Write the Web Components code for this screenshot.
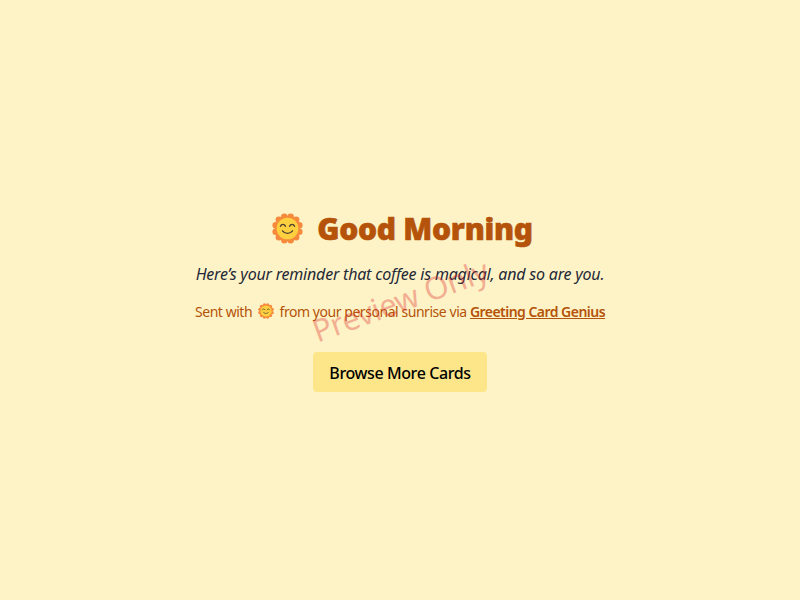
<!DOCTYPE html>
<html lang="en"><head><meta charset="utf-8"><title>Good Morning</title>
<style>
html,body{margin:0;height:100%;background:#fef3c7}
body{font-family:"Noto Sans","Open Sans","Liberation Sans",sans-serif}
a{color:inherit;font-weight:600;letter-spacing:-.53px}
.gap{margin:0 2.5px}
</style></head><body>
<greeting-page>
<sun-face slot="title-icon" size="31"></sun-face>
<span slot="title">Good Morning</span>
<span slot="message">Here’s your reminder that coffee is magical, and so are you.</span>
<span slot="footer">Sent with <sun-face class="gap" size="16"></sun-face> from your personal sunrise via <a href="#">Greeting Card Genius</a></span>
<span slot="action">Browse More Cards</span>
</greeting-page>
<script>
class SunFace extends HTMLElement{
  connectedCallback(){
    const s=+this.getAttribute('size')||16;
    const r=this.shadowRoot||this.attachShadow({mode:'open'});
    let petals='';
    for(let i=0;i<12;i++){const a=(i+.5)*Math.PI/6;petals+=`<circle cx="${(18+14.2*Math.cos(a)).toFixed(2)}" cy="${(18+14.2*Math.sin(a)).toFixed(2)}" r="3.8" fill="#f68a3c"/>`}
    r.innerHTML=`<style>:host{display:inline-block;width:${s}px;height:${s}px;vertical-align:-0.2em}svg{display:block;width:100%;height:100%}</style>
    <svg viewBox="0 0 36 36" aria-hidden="true">${petals}<circle cx="18" cy="18" r="14.6" fill="#f68a3c"/><circle cx="18" cy="18" r="12.6" fill="#fdd03f"/>
    <path d="M9.8 15.4c1.2-3 4.6-3 5.8 0M20.4 15.4c1.2-3 4.6-3 5.8 0M12.2 20.8c2.8 3.8 8.8 3.8 11.6 0" fill="none" stroke="#4e4034" stroke-width="1.6" stroke-linecap="round"/></svg>`;
  }
}
customElements.define('sun-face',SunFace);
class GreetingPage extends HTMLElement{
  constructor(){super();this.attachShadow({mode:'open'}).innerHTML=`<style>
  :host{display:flex;flex-direction:column;align-items:center;justify-content:center;height:100vh;box-sizing:border-box;padding-top:2px;position:relative;overflow:hidden;text-align:center;color:#1f2937}
  h1{margin:0 0 0 5px;font-size:30px;line-height:36px;font-weight:900;color:#b45309;font-family:"Noto Sans",sans-serif;display:flex;align-items:center;gap:14px;letter-spacing:-.3px;-webkit-text-stroke:.6px #b45309}
  .msg{margin:15px 0 0;font-size:16px;line-height:24px;font-style:italic;letter-spacing:-.2px}
  .foot{margin:16px 0 0;font-size:14px;line-height:20px;color:#b45309;letter-spacing:-.45px;font-weight:400}
  button{margin-top:30px;width:174px;height:40px;border:0;border-radius:4px;background:#fde68a;color:#000;font:500 16px/24px "Noto Sans",sans-serif;letter-spacing:-.4px;padding:2px 0 0}
  .mark{position:absolute;left:50%;top:50%;transform:translate(-50%,-50%) rotate(-20deg);font-size:31px;line-height:40px;color:#dc2626;opacity:.33;white-space:nowrap;pointer-events:none;letter-spacing:-.3px}
  </style>
  <h1><slot name="title-icon"></slot><slot name="title"></slot></h1>
  <p class="msg"><slot name="message"></slot></p>
  <p class="foot"><slot name="footer"></slot></p>
  <button><slot name="action"></slot></button>
  <div class="mark">Preview Only</div>`}
}
customElements.define('greeting-page',GreetingPage);
</script>
</body></html>
